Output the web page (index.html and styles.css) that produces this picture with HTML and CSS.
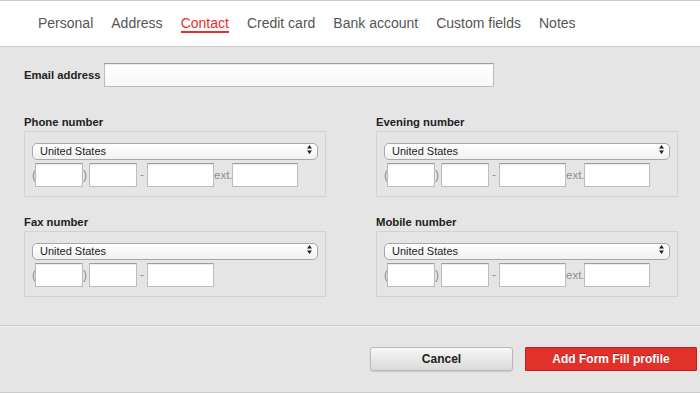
FILE: index.html
```html
<!DOCTYPE html>
<html lang="en">
<head>
    <meta charset="UTF-8">
    <title>Form Fill profile - Contact</title>
    <link rel="stylesheet" href="styles.css">
</head>
<body>
    <nav class="tabs">
        <a class="tab">Personal</a>
        <a class="tab">Address</a>
        <a class="tab active">Contact</a>
        <a class="tab">Credit card</a>
        <a class="tab">Bank account</a>
        <a class="tab">Custom fields</a>
        <a class="tab">Notes</a>
    </nav>

    <main class="form">
        <div class="email-row">
            <label class="field-label" for="email">Email address</label>
            <input type="text" id="email" class="email-input">
        </div>

        <div class="phone-grid">
            <div class="phone-field">
                <div class="field-label">Phone number</div>
                <div class="phone-box">
                    <div class="country">
                        <select><option>United States</option></select>
                        <svg class="arrows" width="5" height="9" viewBox="0 0 5 9"><path d="M2.5 0 L5 3.5 H0 Z M2.5 9 L5 5.5 H0 Z" fill="#222"/></svg>
                    </div>
                    <div class="number-row">
                        <span class="sep paren">(</span><input class="num area">
                        <span class="sep close">)</span><input class="num prefix">
                        <span class="sep dash">-</span><input class="num line">
                        <span class="sep ext">ext.</span><input class="num extension">
                    </div>
                </div>
            </div>

            <div class="phone-field">
                <div class="field-label">Evening number</div>
                <div class="phone-box">
                    <div class="country">
                        <select><option>United States</option></select>
                        <svg class="arrows" width="5" height="9" viewBox="0 0 5 9"><path d="M2.5 0 L5 3.5 H0 Z M2.5 9 L5 5.5 H0 Z" fill="#222"/></svg>
                    </div>
                    <div class="number-row">
                        <span class="sep paren">(</span><input class="num area">
                        <span class="sep close">)</span><input class="num prefix">
                        <span class="sep dash">-</span><input class="num line">
                        <span class="sep ext">ext.</span><input class="num extension">
                    </div>
                </div>
            </div>

            <div class="phone-field">
                <div class="field-label">Fax number</div>
                <div class="phone-box">
                    <div class="country">
                        <select><option>United States</option></select>
                        <svg class="arrows" width="5" height="9" viewBox="0 0 5 9"><path d="M2.5 0 L5 3.5 H0 Z M2.5 9 L5 5.5 H0 Z" fill="#222"/></svg>
                    </div>
                    <div class="number-row">
                        <span class="sep paren">(</span><input class="num area">
                        <span class="sep close">)</span><input class="num prefix">
                        <span class="sep dash">-</span><input class="num line">
                    </div>
                </div>
            </div>

            <div class="phone-field">
                <div class="field-label">Mobile number</div>
                <div class="phone-box">
                    <div class="country">
                        <select><option>United States</option></select>
                        <svg class="arrows" width="5" height="9" viewBox="0 0 5 9"><path d="M2.5 0 L5 3.5 H0 Z M2.5 9 L5 5.5 H0 Z" fill="#222"/></svg>
                    </div>
                    <div class="number-row">
                        <span class="sep paren">(</span><input class="num area">
                        <span class="sep close">)</span><input class="num prefix">
                        <span class="sep dash">-</span><input class="num line">
                        <span class="sep ext">ext.</span><input class="num extension">
                    </div>
                </div>
            </div>
        </div>
    </main>

    <footer class="actions">
        <button class="btn cancel">Cancel</button>
        <button class="btn primary">Add Form Fill profile</button>
    </footer>
</body>
</html>
```

FILE: styles.css
```css
:root {
    --page-bg: #e5e5e5;
    --line: #cbcbcb;
    --red: #e2302a;
    --tab-text: #555555;
}

body, html {
    margin: 0;
    padding: 0;
    height: 100%;
    overflow: hidden;
    background-color: var(--page-bg);
    font-family: 'Liberation Sans', Arial, sans-serif;
    color: #222;
}

/* tab bar */
.tabs {
    display: flex;
    gap: 18px;
    background: #fff;
    border-top: 1px solid var(--line);
    border-bottom: 1px solid var(--line);
    padding: 14px 0 13px 38px;
}

.tab {
    font-size: 14px;
    line-height: 16px;
    color: var(--tab-text);
    border-bottom: 2px solid transparent;
    cursor: pointer;
}

.tab.active {
    color: var(--red);
    border-bottom-color: var(--red);
}

/* form body */
.form {
    padding: 16px 0 28px 24px;
}

.field-label {
    font-size: 11.3px;
    line-height: 14px;
    font-weight: bold;
    color: #222;
}

.email-row {
    display: flex;
    align-items: center;
    gap: 3px;
}

input {
    box-sizing: border-box;
    height: 24px;
    margin: 0;
    padding: 0 4px;
    background: #fff;
    border: 1px solid #bdbdbd;
    border-top-color: #9d9d9d;
    box-shadow: inset 0 1px 1px rgba(0, 0, 0, 0.08);
    font-family: inherit;
    font-size: 12px;
}

.email-input {
    width: 390px;
    background: linear-gradient(#ffffff, #f7f7f7);
}

.phone-grid {
    display: grid;
    grid-template-columns: 302px 302px;
    column-gap: 50px;
    row-gap: 18px;
    margin-top: 28px;
}

.phone-field .field-label {
    margin-bottom: 2px;
}

.phone-box {
    border: 1px solid #d2d2d2;
    padding: 9px 7px 9px 7px;
}

.country {
    position: relative;
    height: 17px;
    margin-bottom: 5px;
}

.country select {
    appearance: none;
    -webkit-appearance: none;
    box-sizing: border-box;
    width: 100%;
    height: 17px;
    margin: 0;
    padding: 0 0 0 7px;
    border: 1px solid #a8a8a8;
    border-radius: 5px;
    background: linear-gradient(#ffffff, #f1f1f1);
    font-family: inherit;
    font-size: 11px;
    line-height: 15px;
    color: #222;
}

.country .arrows {
    position: absolute;
    right: 6px;
    top: 4px;
    pointer-events: none;
}

.number-row {
    display: flex;
    align-items: center;
    height: 24px;
}

.sep {
    font-size: 12px;
    color: #8e8e8e;
    text-align: center;
}

.paren { width: 3px; text-align: left; }
.close { width: 6px; text-align: left; }
.dash { width: 10px; }
.ext { width: 18px; text-align: left; font-size: 11.5px; }

.area { width: 48px; }
.prefix { width: 48px; }
.line { width: 67px; }
.extension { width: 66px; }

/* footer buttons */
.actions {
    display: flex;
    justify-content: flex-end;
    gap: 12px;
    border-top: 1px solid var(--line);
    border-bottom: 1px solid var(--line);
    box-shadow: inset 0 1px 0 #ededed;
    height: 68px;
    box-sizing: border-box;
    padding: 21px 3px 0 0;
}

.btn {
    height: 24px;
    box-sizing: border-box;
    padding: 0;
    font-family: inherit;
    font-size: 12px;
    font-weight: bold;
    cursor: pointer;
}

.cancel {
    width: 143px;
    color: #222;
    background: linear-gradient(#f7f7f7, #dadada);
    border: 1px solid #b9b9b9;
    border-radius: 3px;
    box-shadow: 0 1px 1px rgba(0, 0, 0, 0.12);
}

.primary {
    width: 172px;
    color: #fff;
    background: var(--red);
    border: 1px solid #c41e19;
    border-radius: 1px;
    text-shadow: 0 -1px 0 rgba(0, 0, 0, 0.25);
}
```
